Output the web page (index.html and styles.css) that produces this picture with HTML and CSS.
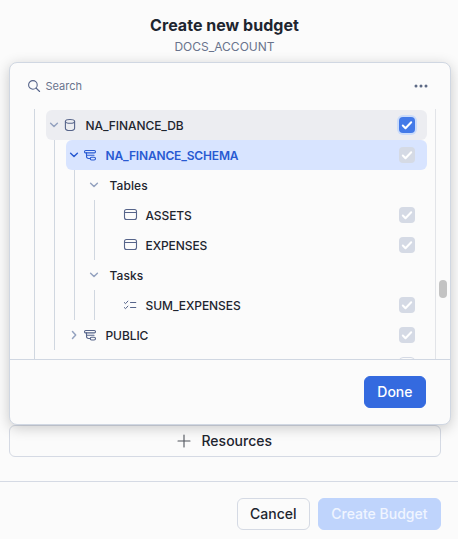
FILE: index.html
```html
<!DOCTYPE html>
<html lang="en">
<head>
<meta charset="utf-8">
<title>Create new budget</title>
<link rel="stylesheet" href="styles.css">
</head>
<body>
<svg class="defs" aria-hidden="true">
  <symbol id="down" viewBox="0 0 16 16"><path d="M4.6 6.3 8 9.5 11.4 6.3"/></symbol>
  <symbol id="right" viewBox="0 0 16 16"><path d="M6.5 4.6 9.7 8 6.5 11.4"/></symbol>
  <symbol id="schema" viewBox="0 0 16 16"><rect x="2.5" y="3.5" width="11" height="2.4" rx="1.2"/><path d="M4.5 5.9v3.4a2.2 2.2 0 0 0 2.2 2.2h1.5M5 8.3h7"/><rect x="8.2" y="10.2" width="5.3" height="2.8" rx="1.4"/></symbol>
  <symbol id="table" viewBox="0 0 16 16"><rect x="2.5" y="2.5" width="12" height="10" rx="2"/><path d="M2.5 5.5h12"/></symbol>
  <symbol id="check" viewBox="0 0 16 16"><path d="M3.8 8.5 6.5 11.2 12.2 5.2"/></symbol>
</svg>
<main class="page">
  <header class="header">
    <h1 class="title">Create new budget</h1>
    <p class="account">DOCS_ACCOUNT</p>
  </header>
  <button class="button resources"><svg class="plus" viewBox="0 0 14 14"><path d="M7 1v12M1 7h12"/></svg>Resources</button>
  <footer class="footer">
    <button class="button cancel">Cancel</button>
    <button class="button create" disabled>Create Budget</button>
  </footer>
</main>
<section class="popover">
  <div class="search">
    <svg class="icon" viewBox="0 0 16 16"><circle cx="6.9" cy="6.9" r="4.3"/><path d="m10 10 3.6 3.5"/></svg>
    <span class="placeholder">Search</span>
    <svg class="more" viewBox="0 0 16 16"><circle cx="3" cy="8" r="1.5"/><circle cx="8" cy="8" r="1.5"/><circle cx="13" cy="8" r="1.5"/></svg>
  </div>
  <div class="scroller">
    <div class="tree">
      <div class="group root">
        <div class="row hovered"><svg class="chevron"><use href="#down"/></svg><svg class="icon" viewBox="0 0 16 16"><ellipse cx="8" cy="4.4" rx="4.6" ry="1.9"/><path d="M3.4 4.4v6.8c0 1.6 1.6 2.3 4.6 2.3s4.6-.7 4.6-2.3V4.4"/></svg><span class="label">NA_FINANCE_DB</span><span class="box checked"><svg><use href="#check"/></svg></span></div>
        <div class="group">
          <div class="row selected"><svg class="chevron"><use href="#down"/></svg><svg class="icon"><use href="#schema"/></svg><span class="label">NA_FINANCE_SCHEMA</span><span class="box"><svg><use href="#check"/></svg></span></div>
          <div class="group">
            <div class="row"><svg class="chevron"><use href="#down"/></svg><span class="label">Tables</span></div>
            <div class="group">
              <div class="row leaf"><svg class="icon"><use href="#table"/></svg><span class="label">ASSETS</span><span class="box"><svg><use href="#check"/></svg></span></div>
              <div class="row leaf"><svg class="icon"><use href="#table"/></svg><span class="label">EXPENSES</span><span class="box"><svg><use href="#check"/></svg></span></div>
            </div>
            <div class="row"><svg class="chevron"><use href="#down"/></svg><span class="label">Tasks</span></div>
            <div class="group">
              <div class="row leaf"><svg class="icon tasks" viewBox="0 0 16 16"><path d="m2.3 5.5 1.2 1.2 2.4-2.6M2.3 10.5l1.2 1.2 2.4-2.6M8.5 5.5h5.3M8.5 10.5h5.3"/></svg><span class="label">SUM_EXPENSES</span><span class="box"><svg><use href="#check"/></svg></span></div>
            </div>
          </div>
          <div class="row"><svg class="chevron"><use href="#right"/></svg><svg class="icon"><use href="#schema"/></svg><span class="label">PUBLIC</span><span class="box"><svg><use href="#check"/></svg></span></div>
        </div>
        <div class="row"><span class="box empty"></span></div>
      </div>
    </div>
    <div class="track"><div class="thumb"></div></div>
  </div>
  <div class="actions"><button class="button done">Done</button></div>
</section>
</body>
</html>
```
FILE: styles.css
```css
* { box-sizing: border-box; }
body { margin: 0; background: #fbfbfb; color: #1e252f; font-family: Inter, sans-serif; overflow: hidden; }
svg { display: block; flex: none; fill: none; stroke: currentColor; stroke-linecap: round; stroke-linejoin: round; }
.defs { position: absolute; width: 0; height: 0; }
.page { height: 539px; display: flex; flex-direction: column; }
.header { height: 425px; padding: 15px 17px 0 8px; text-align: center; }
.title { margin: 0; font-size: 16px; line-height: 20px; font-weight: 700; letter-spacing: .03px; }
.account { margin: 4px 0 0; font-size: 12px; line-height: 16px; color: #69738c; }
.button { height: 32px; padding: 0 12.5px; border: 1px solid #d5dae4; border-radius: 6px; background: #fbfbfb; color: #1e252f; font: 500 14px/20px Inter, sans-serif; display: flex; align-items: center; justify-content: center; white-space: nowrap; }
.resources { flex: none; margin: 0 17px 0 9px; padding-right: 13px; gap: 10px; }
.plus { width: 14px; height: 14px; stroke-width: 1.1; color: #50555d; }
.footer { margin-top: 24px; flex: 1; padding: 16px 17px 0 0; border-top: 1px solid #d5dae4; display: flex; justify-content: flex-end; gap: 8px; }
.cancel { width: 73px; padding: 0; }
.create { background: #bfd4fc; border-color: #bfd4fc; color: #f0f5ff; }
.popover { position: absolute; left: 9px; top: 62px; width: 442px; height: 363px; border: 1px solid #d0d7e2; border-radius: 8px; background: #fbfbfb; box-shadow: 0 3px 14px rgba(0, 0, 0, .2); display: flex; flex-direction: column; }
.search { height: 46px; padding: 0 21px 0 16px; display: flex; align-items: center; color: #5d6a85; }
.placeholder { flex: 1; margin-left: 3.5px; font-size: 11px; line-height: 16px; color: #69738c; }
.more { width: 16px; height: 16px; fill: currentColor; stroke: none; }
.icon, .chevron { width: 16px; height: 16px; }
.icon { stroke-width: 1.1; color: #56648a; }
.tasks { stroke-width: 1; }
.chevron { stroke-width: 1.5; color: #94a2bf; }
.scroller { height: 250px; display: flex; overflow: hidden; }
.tree { flex: 1; padding: 0 8px 0 24px; }
.group { margin-left: 8px; padding-left: 11px; border-left: 1px solid #d0d7e0; }
.root { margin-left: 0; padding-top: 1px; height: 250px; }
.row { height: 30px; padding-right: 12px; display: flex; align-items: center; border-radius: 6px; font-size: 12px; line-height: 16px; font-weight: 450; }
.label { padding-top: 2px; letter-spacing: -.08px; }
.chevron + .icon { margin-right: 7.5px; }
.chevron + .label { margin-left: 7.5px; letter-spacing: .08px; }
.leaf { padding-left: 16px; }
.leaf .icon { margin-right: 7.5px; }
.hovered { background: #ecedf1; }
.selected { background: #d8e4ff; color: #285ad2; font-weight: 600; }
.selected .label { letter-spacing: -.16px; }
.selected .icon, .selected .chevron { color: #285ad2; }
.box { width: 16px; height: 16px; margin-left: auto; border-radius: 4px; background: #d5dae5; color: #fff; }
.box svg { width: 16px; height: 16px; stroke-width: 2; }
.checked { background: #437ae8; box-shadow: 0 0 0 2px #cbdcfa; }
.empty { border: 1px solid #d5dae5; background: #fbfbfb; }
.track { width: 15px; border-left: 1px solid #e2e4e8; padding: 171px 3px 0; }
.thumb { width: 8px; height: 18px; border-radius: 4px; background: #c3c3c3; }
.actions { flex: 1; padding: 16px 24px 0; border-top: 1px solid #d0d7e2; display: flex; justify-content: flex-end; align-items: flex-start; }
.done { border-color: #346adf; background: #346adf; color: #fff; }
```
